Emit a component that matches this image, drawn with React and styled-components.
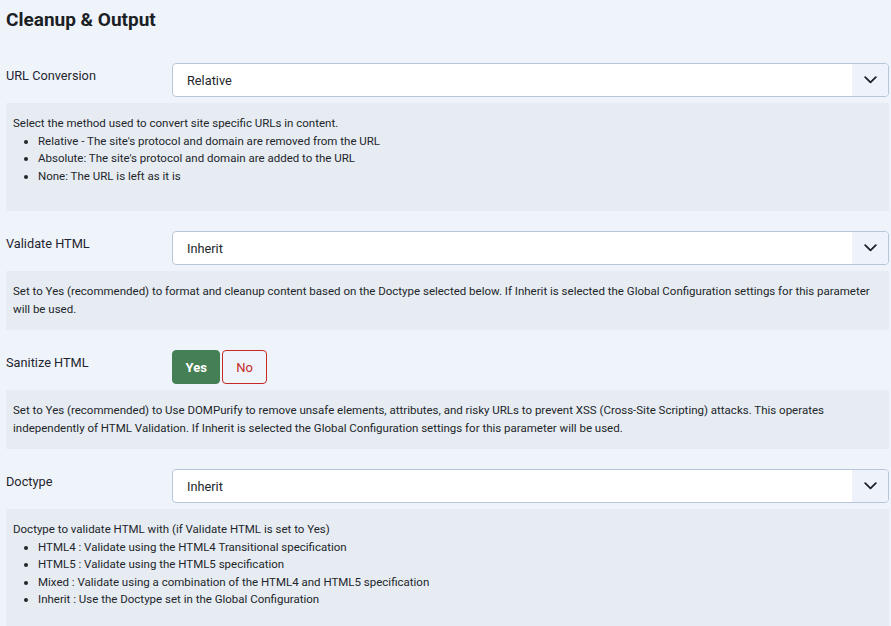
import React from "react";
import styled, { createGlobalStyle } from "styled-components";

const Global = createGlobalStyle`
  html, body { margin: 0; padding: 0; background: #eff4fb; }
  body { font-family: Roboto, "Noto Sans", "Liberation Sans", sans-serif; color: #1f2328; }
  * { box-sizing: border-box; }
`;

const Page = styled.div`
  padding: 9px 2px 0 6px;
  width: 891px;
  height: 626px;
  overflow: hidden;
`;

const Title = styled.h2`
  margin: 0 0 32px;
  font-size: 19px;
  line-height: 22px;
  font-weight: 700;
  color: #1c1f24;
`;

const Field = styled.div`
  margin-bottom: 20px;
`;

const Row = styled.div`
  display: grid;
  grid-template-columns: 166px 1fr;
  align-items: start;
`;

const Label = styled.label`
  font-size: 12.75px;
  line-height: 17px;
  padding-top: 4px;
  color: #1f2430;
`;

const SelectBox = styled.div`
  display: flex;
  align-items: center;
  height: 34px;
  background: #fff;
  border: 1px solid #b8c6dc;
  border-radius: 4px;
  overflow: hidden;
`;

const SelectValue = styled.span`
  flex: 1;
  padding-left: 14px;
  font-size: 12.75px;
  color: #22262b;
`;

const Caret = styled.span`
  width: 36px;
  align-self: stretch;
  display: flex;
  align-items: center;
  justify-content: center;
  background: #eef3fb;
`;

const Toggle = styled.div`
  display: flex;
  gap: 2px;
`;

const ToggleButton = styled.button`
  height: 34px;
  padding: 0 ${(p) => (p.$on ? 12.5 : 13)}px;
  border-radius: 4px;
  font-family: inherit;
  font-size: 13px;
  font-weight: ${(p) => (p.$on ? 700 : 400)};
  color: ${(p) => (p.$on ? "#ffffff" : "#c52827")};
  background: ${(p) => (p.$on ? "#447f55" : "transparent")};
  border: 1px solid ${(p) => (p.$on ? "#447f55" : "#c52827")};
`;

const Description = styled.div`
  margin-top: 6px;
  background: #e7ecf3;
  padding: 12px 7px;
  font-size: 11.5px;
  line-height: 17.5px;
  color: #22262a;
`;

const List = styled.ul`
  margin: 0 0 14px;
  padding-left: 25px;
`;

const Chevron = () => (
  <svg width="13" height="8" viewBox="0 0 13 8" fill="none">
    <path d="M1.2 1.2 L6.5 6.4 L11.8 1.2" stroke="#1d2126" strokeWidth="1.8" strokeLinecap="round" strokeLinejoin="round" />
  </svg>
);

const Select = ({ value }) => (
  <SelectBox>
    <SelectValue>{value}</SelectValue>
    <Caret>
      <Chevron />
    </Caret>
  </SelectBox>
);

export default function App() {
  return (
    <Page>
      <Global />
      <Title>Cleanup &amp; Output</Title>

      <Field>
        <Row>
          <Label>URL Conversion</Label>
          <Select value="Relative" />
        </Row>
        <Description>
          Select the method used to convert site specific URLs in content.
          <List>
            <li>Relative - The site's protocol and domain are removed from the URL</li>
            <li>Absolute: The site's protocol and domain are added to the URL</li>
            <li>None: The URL is left as it is</li>
          </List>
        </Description>
      </Field>

      <Field>
        <Row>
          <Label>Validate HTML</Label>
          <Select value="Inherit" />
        </Row>
        <Description>
          Set to Yes (recommended) to format and cleanup content based on the Doctype selected below. If Inherit is
          selected the Global Configuration settings for this parameter will be used.
        </Description>
      </Field>

      <Field>
        <Row>
          <Label>Sanitize HTML</Label>
          <Toggle>
            <ToggleButton $on>Yes</ToggleButton>
            <ToggleButton>No</ToggleButton>
          </Toggle>
        </Row>
        <Description>
          Set to Yes (recommended) to Use DOMPurify to remove unsafe elements, attributes, and risky URLs to prevent XSS
          (Cross-Site Scripting) attacks. This operates independently of HTML Validation. If Inherit is selected the
          Global Configuration settings for this parameter will be used.
        </Description>
      </Field>

      <Field>
        <Row>
          <Label>Doctype</Label>
          <Select value="Inherit" />
        </Row>
        <Description>
          Doctype to validate HTML with (if Validate HTML is set to Yes)
          <List>
            <li>HTML4 : Validate using the HTML4 Transitional specification</li>
            <li>HTML5 : Validate using the HTML5 specification</li>
            <li>Mixed : Validate using a combination of the HTML4 and HTML5 specification</li>
            <li>Inherit : Use the Doctype set in the Global Configuration</li>
          </List>
        </Description>
      </Field>
    </Page>
  );
}
